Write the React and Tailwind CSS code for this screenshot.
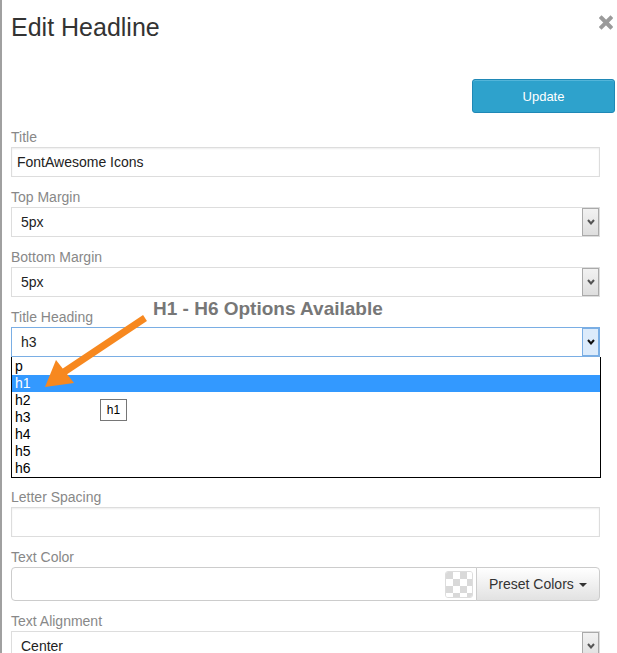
import { useState } from 'react'

const font = "font-['Liberation_Sans',Arial,Helvetica,sans-serif]"

function Chevron({ color = '#555' }) {
  return (
    <svg width="8" height="6" viewBox="0 0 8 6">
      <polyline points="1,1 4,4.5 7,1" fill="none" stroke={color} strokeWidth="2" />
    </svg>
  )
}

function Label({ children }) {
  return <div className="text-[14px] leading-[20px] text-[#888]">{children}</div>
}

function TextInput({ value }) {
  return (
    <div className="h-[30px] border border-[#ddd] shadow-[inset_0_1px_2px_rgba(0,0,0,0.07)] px-[5px] flex items-center text-[14px] text-[#222]">
      {value}
    </div>
  )
}

function Select({ value, focused = false }) {
  return (
    <div
      className={
        focused
          ? 'h-[30px] border border-[#7aaee4] flex items-center text-[14px] text-[#222] bg-white'
          : 'h-[30px] border border-[#ddd] flex items-center text-[14px] text-[#222] bg-white'
      }
    >
      <span className="pl-[9px] flex-1">{value}</span>
      {focused ? (
        <div className="w-[17px] h-[28px] border border-[#7aaee4] bg-[#dcebfb] flex items-center justify-center">
          <Chevron color="#111" />
        </div>
      ) : (
        <div className="w-[17px] h-[28px] border border-[#aaa] bg-gradient-to-b from-[#f2f2f2] to-[#dedede] flex items-center justify-center">
          <Chevron />
        </div>
      )}
    </div>
  )
}

function Checker() {
  return (
    <div className="w-[28px] h-[27px] border border-[#ddd] rounded-[3px] overflow-hidden">
      <svg width="28" height="27">
        <defs>
          <pattern id="chk" width="14" height="14" patternUnits="userSpaceOnUse">
            <rect width="14" height="14" fill="#fff" />
            <rect width="7" height="7" fill="#d9d9d9" />
            <rect x="7" y="7" width="7" height="7" fill="#d9d9d9" />
          </pattern>
        </defs>
        <rect width="28" height="27" fill="url(#chk)" />
      </svg>
    </div>
  )
}

export default function App() {
  const [heading] = useState('h3')
  const options = ['p', 'h1', 'h2', 'h3', 'h4', 'h5', 'h6']

  return (
    <div className={`relative w-[617px] h-[653px] overflow-hidden bg-white border-l-2 border-[#a0a0a0] pl-[9px] ${font}`}>

      {/* Header */}
      <div className="flex items-start justify-between pt-[13px] pr-[4px]">
        <h2 className="text-[25px] leading-[28px] text-[#333]">Edit Headline</h2>
        <svg width="14" height="15" viewBox="0 0 14 15" className="mt-[2px]">
          <path d="M2.5 3 L11.5 12 M11.5 3 L2.5 12" stroke="#9a9a9a" strokeWidth="4" strokeLinecap="square" />
        </svg>
      </div>

      <div className="flex justify-end pr-[2px] mt-[38px]">
        <button className="w-[143px] h-[34px] rounded-[3px] border border-[#1f88b6] bg-[#2ea2cc] shadow-[inset_0_1px_0_rgba(120,200,230,0.5)] text-white text-[13px] pt-[2px]">
          Update
        </button>
      </div>

      {/* Form */}
      <div className="mt-[14px] pr-[17px] flex flex-col gap-[10px]">
        <div>
          <Label>Title</Label>
          <TextInput value="FontAwesome Icons" />
        </div>
        <div>
          <Label>Top Margin</Label>
          <Select value="5px" />
        </div>
        <div>
          <Label>Bottom Margin</Label>
          <Select value="5px" />
        </div>
        <div className="relative z-10">
          <Label>Title Heading</Label>
          <Select value={heading} focused />
          {/* open option list */}
          <div className="absolute top-full left-0 -right-px bg-white border border-t-0 border-black pt-px text-[14px] text-black">
            {options.map((o) => (
              <div
                key={o}
                className={o === 'h1' ? 'h-[17px] leading-[17px] pl-[3px] bg-[#3399ff] text-white' : 'h-[17px] leading-[17px] pl-[3px]'}
              >
                {o}
              </div>
            ))}
          </div>
        </div>
        {/* fields hidden under the open list */}
        <div className="h-[110px]" />
        <div>
          <Label>Letter Spacing</Label>
          <TextInput value="" />
        </div>
        <div>
          <Label>Text Color</Label>
          <div className="flex h-[34px]">
            <div className="flex-1 border border-[#ccc] rounded-l-[4px] flex items-center justify-end pr-[3px]">
              <Checker />
            </div>
            <button className="w-[124px] -ml-px border border-[#ccc] rounded-r-[4px] bg-gradient-to-b from-white to-[#e2e2e2] text-[14px] text-[#333] flex items-center pl-[12px]">
              Preset Colors
              <span className="ml-[5px] mt-[2px] border-x-4 border-x-transparent border-t-4 border-t-[#333]" />
            </button>
          </div>
        </div>
        <div>
          <Label>Text Alignment</Label>
          <Select value="Center" />
        </div>
      </div>

      {/* Annotation */}
      <div className="absolute z-20 left-[151px] top-[298px] text-[19px] leading-[22px] font-bold text-[#777]">
        H1 - H6 Options Available
      </div>
      <div className="absolute z-20 left-[98px] top-[399px] w-[27px] h-[22px] border border-[#767676] bg-white text-[12px] text-black flex items-center justify-center">
        h1
      </div>
      <svg className="absolute z-30 left-[-2px] top-0 pointer-events-none" width="617" height="653" viewBox="0 0 617 653">
        <line x1="145" y1="318" x2="64" y2="372" stroke="#f7881f" strokeWidth="7" />
        <polygon points="45,387 56,360 74,383" fill="#f7881f" />
      </svg>
    </div>
  )
}
